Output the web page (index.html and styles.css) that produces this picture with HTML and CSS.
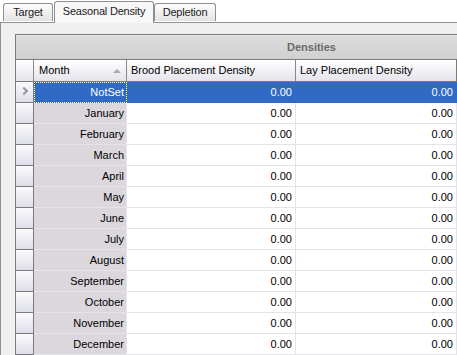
FILE: index.html
```html
<!DOCTYPE html>
<html lang="en">
<head>
    <meta charset="UTF-8">
    <title>Seasonal Density</title>
    <link rel="stylesheet" href="styles.css">
</head>
<body>
    <div class="tabs">
        <div class="tab tab-target">Target</div>
        <div class="tab active">Seasonal Density</div>
        <div class="tab tab-depletion">Depletion</div>
    </div>
    <div class="page">
        <div class="grid">
            <div class="band"><span>Densities</span></div>
            <div class="row head">
                <div class="sel"></div>
                <div class="cell month">Month<span class="sort"></span></div>
                <div class="cell brood">Brood Placement Density</div>
                <div class="cell lay">Lay Placement Density</div>
            </div>
            <div id="rows"></div>
        </div>
    </div>

    <script>
        const months = ['NotSet', 'January', 'February', 'March', 'April', 'May', 'June',
            'July', 'August', 'September', 'October', 'November', 'December'];
        const rows = document.getElementById('rows');

        months.forEach((m, i) => {
            const row = document.createElement('div');
            row.className = i === 0 ? 'row current' : 'row';
            row.innerHTML =
                '<div class="sel">' + (i === 0 ? '<span class="arrow"></span>' : '') + '</div>' +
                '<div class="cell month">' + m + '</div>' +
                '<div class="cell brood num">0.00</div>' +
                '<div class="cell lay num">0.00</div>';
            rows.appendChild(row);
        });
    </script>
</body>
</html>
```

FILE: styles.css
```css
html {
    font-family: 'Liberation Sans', Arial, sans-serif;
    font-size: 11px;
    color: #000;
    background: #fff;
}

body {
    margin: 0;
    overflow: hidden;
    height: 355px;
}

*,
*:before,
*:after {
    box-sizing: border-box;
}

/* tab strip */
.tabs {
    display: flex;
    align-items: flex-end;
    height: 22px;
    padding-left: 3px;
}

.tab {
    height: 18px;
    margin-bottom: 1px;
    padding: 0;
    text-align: center;
    line-height: 16px;
    letter-spacing: -0.2px;
    border: 1px solid #8e8f8f;
    border-bottom: none;
    border-radius: 3px 3px 0 0;
    background: linear-gradient(#fdfdfd, #e4e4e4);
    color: #222;
}

.tab-target {
    width: 50px;
}

.tab-depletion {
    width: 62px;
}

.tab.active {
    width: 100px;
    height: 22px;
    margin-bottom: -1px;
    margin-left: 1px;
    line-height: 18px;
    background: #f7f7f7;
    position: relative;
}

/* tab page */
.page {
    height: 334px;
    border-top: 1px solid #919191;
    border-left: 1px solid #919191;
    background: #f0f0f0;
    padding: 11px 0 0 14px;
}

.grid {
    border-left: 1px solid #7a7a7a;
    border-top: 1px solid #7a7a7a;
    background: #fff;
}

.band {
    height: 25px;
    border-top: 1px solid #e6e6e6;
    background: linear-gradient(#dcdcdc, #d0d0d0);
    border-bottom: 1px solid #7a7a7a;
    padding-left: 271px;
    line-height: 23px;
    font-weight: bold;
    color: #6a6a6a;
}

.row {
    display: flex;
    height: 21px;
}

.sel {
    width: 18px;
    flex: none;
    border-right: 1px solid #7a7a7a;
    border-bottom: 1px solid #7a7a7a;
    background: linear-gradient(#fbfbfd, #dedee8);
    position: relative;
}

.cell {
    flex: none;
    height: 21px;
    line-height: 20px;
    padding: 0 4px;
    border-right: 1px solid #e4e4e8;
    border-bottom: 1px solid #e4e4e8;
    white-space: nowrap;
    overflow: hidden;
}

.month {
    width: 93px;
    text-align: right;
    padding-right: 2px;
    background: #dbd7dc;
}

.brood {
    width: 169px;
}

.lay {
    flex: 1;
    min-width: 0;
}

.num {
    text-align: right;
    padding-right: 3px;
}

/* column headers */
.head {
    height: 22px;
}

.head .sel,
.head .cell {
    height: 22px;
    background: linear-gradient(#ffffff, #e4e4ec);
    border-right: 1px solid #8a8a8a;
    border-bottom: 1px solid #7a7a7a;
    line-height: 21px;
    text-align: left;
}

.head .month {
    position: relative;
    padding-left: 5px;
}

.head .brood {
    padding-left: 4px;
}

.head .lay {
    border-right: 1px solid #7a7a7a;
}

.sort {
    position: absolute;
    right: 5px;
    top: 9px;
    border-left: 4px solid transparent;
    border-right: 4px solid transparent;
    border-bottom: 4px solid #a8a8b0;
}

/* current row */
.current .cell {
    background: #316ac5;
    color: #fff;
    border-color: #316ac5;
}

.current .month {
    outline: 1px dotted #fff;
    outline-offset: -1px;
}

.arrow {
    position: absolute;
    left: 5px;
    top: 6px;
    width: 6px;
    height: 6px;
    border-top: 2px solid #9a9aa4;
    border-right: 2px solid #9a9aa4;
    transform: rotate(45deg);
}
```
